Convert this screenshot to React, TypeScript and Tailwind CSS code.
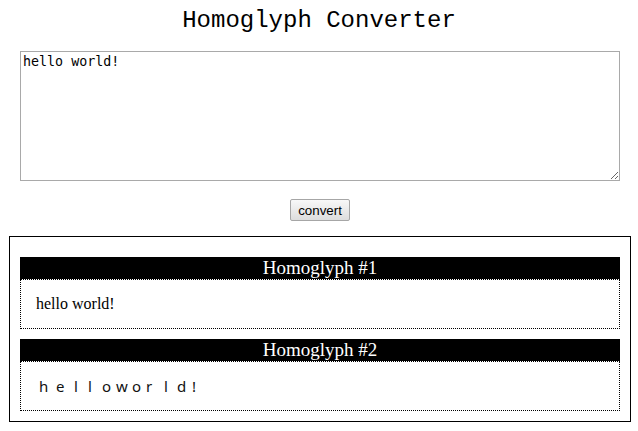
import { useState } from "react";

const glyphs = [
  { c: "h", cls: "w-[17px]" },
  { c: "e", cls: "w-[18px]" },
  { c: "l", cls: "w-[14px]" },
  { c: "l", cls: "w-[14px]" },
  { c: "o", cls: "w-[14px]" },
  { c: "w", cls: "w-[16px]" },
  { c: "o", cls: "w-[14px]" },
  { c: "r", cls: "w-[18px]" },
  { c: "l", cls: "w-[13px]" },
  { c: "d", cls: "w-[15px]" },
  { c: "!", cls: "w-[8px]" },
];

const Result = ({ title, children }: { title: string; children: React.ReactNode }) => (
  <div className="flex flex-col">
    <div className="h-[22px] bg-black text-center text-[19px] leading-[22px] text-white font-['Liberation_Serif',serif]">
      {title}
    </div>
    <div className="border border-dotted border-black px-[15px] py-[15px] text-[16px] leading-[18px] font-['Liberation_Serif',serif] text-black">
      {children}
    </div>
  </div>
);

export default function App() {
  const [text, setText] = useState("hello world!");

  return (
    <div className="w-[638px] min-h-[431px] bg-white">
      <h1 className="pt-[7px] text-center text-[24px] leading-[27px] font-normal font-['Liberation_Mono',monospace] text-black">
        Homoglyph Converter
      </h1>

      <textarea
        value={text}
        onChange={(e) => setText(e.target.value)}
        className="mt-[17px] ml-[20px] block h-[130px] w-[600px] border border-[#a9a9a9] p-[2px] text-[13.33px] leading-[16px] font-['DejaVu_Sans_Mono',monospace] text-black outline-none"
      />

      <div className="mt-[18px] flex justify-center pl-[2px]">
        <button className="h-[22px] rounded-[2px] border border-[#a6a6a6] bg-gradient-to-b from-[#f8f8f8] to-[#dddddd] px-[7px] text-[13.33px] leading-[15px] font-['Liberation_Sans',Arial,sans-serif] text-black">
          convert
        </button>
      </div>

      <div className="mt-[15px] ml-[9px] flex w-[622px] flex-col gap-[10px] border border-black px-[10px] pt-[20px] pb-[10px]">
        <Result title="Homoglyph #1">hello world!</Result>
        <Result title="Homoglyph #2">
          <div className="ml-[3px] flex font-['Noto_Sans',sans-serif] text-[15px] text-[#111]">
            {glyphs.map((g, i) => (
              <span key={i} className={`inline-block ${g.cls}`}>
                {g.c}
              </span>
            ))}
          </div>
        </Result>
      </div>
    </div>
  );
}
